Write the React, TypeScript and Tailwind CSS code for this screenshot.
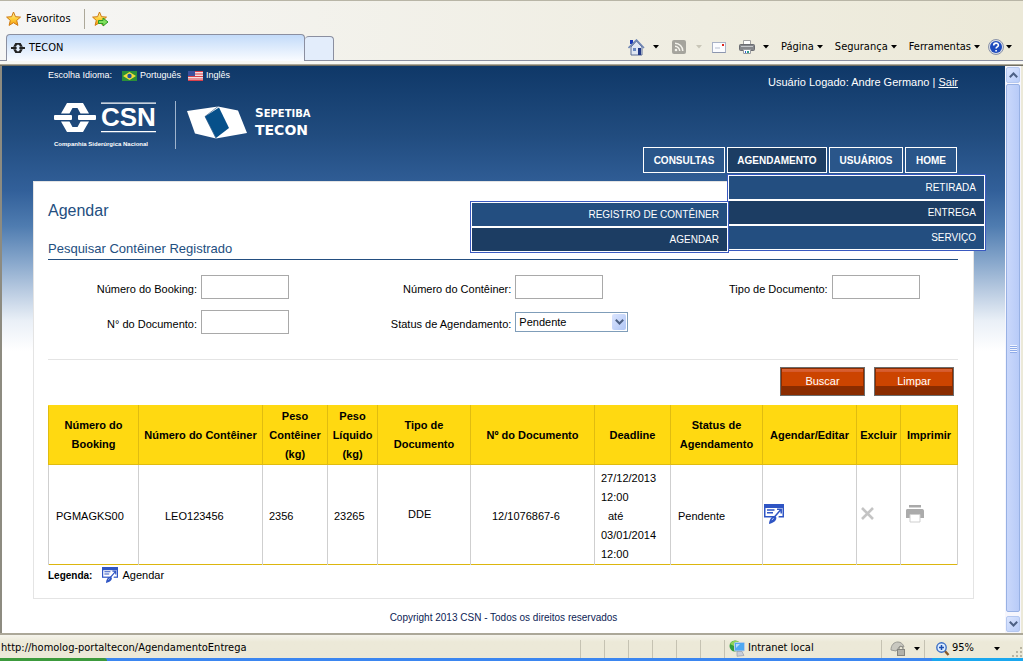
import React, { useState } from 'react';
import clsx from 'clsx';

interface Agendamento {
  booking: string;
  container: string;
  pesoContainer: string;
  pesoLiquido: string;
  tipo: string;
  documento: string;
  deadline: { inicio: string[]; fim: string[] };
  status: string;
}

const agendamentos: Agendamento[] = [
  {
    booking: 'PGMAGKS00',
    container: 'LEO123456',
    pesoContainer: '2356',
    pesoLiquido: '23265',
    tipo: 'DDE',
    documento: '12/1076867-6',
    deadline: { inicio: ['27/12/2013', '12:00'], fim: ['03/01/2014', '12:00'] },
    status: 'Pendente',
  },
];

const columns = [
  { title: 'Número do Booking', width: 'w-[90px]' },
  { title: 'Número do Contêiner', width: 'w-[124px]' },
  { title: 'Peso Contêiner (kg)', width: 'w-[65px]' },
  { title: 'Peso Líquido (kg)', width: 'w-[50px]' },
  { title: 'Tipo de Documento', width: 'w-[93px]' },
  { title: 'Nº do Documento', width: 'w-[124px]' },
  { title: 'Deadline', width: 'w-[76px]' },
  { title: 'Status de Agendamento', width: 'w-[92px]' },
  { title: 'Agendar/Editar', width: 'w-[94px]' },
  { title: 'Excluir', width: 'w-[44px]' },
  { title: 'Imprimir', width: 'w-[57px]' },
];

/* ---------- icons ---------- */

function Caret({ muted = false }: { muted?: boolean }) {
  return (
    <svg width="6" height="4" viewBox="0 0 6 4" className={muted ? 'fill-[#c9c6b8]' : 'fill-black'}>
      <path d="M0 0h6L3 3.6z" />
    </svg>
  );
}

function StarIcon({ withArrow = false }: { withArrow?: boolean }) {
  return (
    <svg width="17" height="16" viewBox="0 0 17 16">
      <defs>
        <linearGradient id="star" x1="0" y1="0" x2="0" y2="1">
          <stop offset="0" stopColor="#fff3b0" />
          <stop offset="0.5" stopColor="#ffd23c" />
          <stop offset="1" stopColor="#f59a12" />
        </linearGradient>
      </defs>
      <path
        d="M7.500 1l2 4.700 5 .4-3.800 3.300 1.200 5-4.400-2.700-4.400 2.700 1.200-5L.6 6.100l5-.4z"
        fill="url(#star)"
        stroke="#cf7a12"
        strokeWidth="1"
        strokeLinejoin="round"
      />
      {withArrow && (
        <path d="M6.500 9.500h4.500V7l5 4-5 4v-2.500H6.500z" fill="#7ee05c" stroke="#2c9a25" strokeWidth="1" strokeLinejoin="round" />
      )}
    </svg>
  );
}

function CsnMark({ className }: { className?: string }) {
  return (
    <svg viewBox="0 0 42 30" className={className} fill="currentColor">
      <path d="M13 0h16l6.500 11H27l-3-5.500h-6L15 11H6.500z" />
      <path d="M13 30h16l6.500-11H27l-3 5.500h-6L15 19H6.500z" />
      <rect x="0" y="12" width="17" height="6" rx="1" />
      <rect x="25" y="12" width="17" height="6" rx="1" />
    </svg>
  );
}

function HomeIcon() {
  return (
    <svg width="17" height="17" viewBox="0 0 17 17">
      <path d="M2 1h3v4H2z" fill="#1838b8" />
      <path d="M3 8l5.500-6L14 8v8H3z" fill="#dfe6f2" stroke="#5d6f96" />
      <path d="M.5 9L8.500 1l7.500 8" fill="none" stroke="#6f86b4" strokeWidth="1.600" />
      <path d="M5 9h3v3H5z" fill="#6a88c0" />
      <path d="M10 9h3v7h-3z" fill="#233a86" />
    </svg>
  );
}

function FeedIcon() {
  return (
    <svg width="14" height="14" viewBox="0 0 14 14">
      <rect width="14" height="14" rx="2" fill="#a5a49d" />
      <circle cx="4" cy="10" r="1.300" fill="#f4f3ec" />
      <path d="M3 6.300A4.700 4.700 0 017.700 11M3 3.200A7.800 7.800 0 0110.800 11" fill="none" stroke="#f4f3ec" strokeWidth="1.500" />
    </svg>
  );
}

function MailIcon() {
  return (
    <svg width="14" height="11" viewBox="0 0 14 11">
      <rect x=".5" y=".5" width="13" height="10" fill="#fbfcff" stroke="#a9b2c6" />
      <path d="M.5 10.500h13" stroke="#8c96ae" />
      <rect x="10" y="2" width="2" height="2" fill="#e0281e" />
      <path d="M3 6h5" stroke="#b7bfcf" />
    </svg>
  );
}

function ToolbarPrinterIcon() {
  return (
    <svg width="16" height="16" viewBox="0 0 16 16">
      <path d="M4.500 1.500h7V6h-7z" fill="#fff" stroke="#a0a0a0" />
      <rect x=".5" y="5.500" width="15" height="6" rx="1" fill="#85878b" stroke="#6b6d72" />
      <path d="M2 7.500h12" stroke="#c6c8cc" />
      <path d="M4.500 10.500h7v4h-7z" fill="#fff" stroke="#9a9ca0" />
      <path d="M6 12h1v2H6z" fill="#2a62d0" />
      <path d="M8 12h2v2H8z" fill="#2f9e8a" />
    </svg>
  );
}

function HelpIcon() {
  return (
    <svg width="16" height="16" viewBox="0 0 16 16">
      <circle cx="8" cy="8" r="7.500" fill="#d9dde6" stroke="#8a93a8" />
      <circle cx="8" cy="8" r="6" fill="#1e4bbd" />
      <path d="M5.700 6.400c0-3 4.700-3 4.700-.2 0 1.600-2.300 1.600-2.300 3.200M8.100 11v1.600" fill="none" stroke="#fff" strokeWidth="1.600" />
    </svg>
  );
}

function BrazilFlag() {
  return (
    <svg width="15" height="10" viewBox="0 0 15 10">
      <rect width="15" height="10" fill="#2c8f38" />
      <path d="M7.500 1L14 5 7.500 9 1 5z" fill="#f3dc3a" />
      <circle cx="7.500" cy="5" r="2.200" fill="#2355a0" />
    </svg>
  );
}

function UsaFlag() {
  return (
    <svg width="15" height="10" viewBox="0 0 15 10">
      <rect width="15" height="10" fill="#f3dfe0" />
      <path d="M0 .5h15M0 3h15M0 5.500h15M0 8h15M0 9.700h15" stroke="#d9404a" strokeWidth="1.200" />
      <rect width="7" height="5" fill="#3c4f9c" />
    </svg>
  );
}

function ScheduleIcon({ className }: { className?: string }) {
  return (
    <svg viewBox="0 0 20 20" className={className}>
      <path d="M0 0h20v13.500H0z" fill="#2f55c4" />
      <path d="M1.500 4h17v8h-17z" fill="#fff" />
      <path d="M3 6h7.500M3 8.800h6" stroke="#2f55c4" strokeWidth="1.400" />
      <path d="M15 9l-5.500 5.200h5z" fill="#fff" />
      <path d="M16.500 6l-6.300 7.300M13 5.200h4.200v4.300" fill="none" stroke="#2f55c4" strokeWidth="1.500" />
      <path d="M12.200 13c.8 3.300-2 5.500-7.200 7 .1-4.200 2.600-7.800 5.400-7.800z" fill="#2f55c4" />
      <path d="M7.800 15.800l1.800-1.400" stroke="#fff" strokeWidth=".8" />
    </svg>
  );
}

function PrintIcon() {
  return (
    <svg width="20" height="18" viewBox="0 0 20 18">
      <path d="M4 0h12v2.500H4z" fill="#a9a9a9" />
      <path d="M2 4h15.500A1.800 1.800 0 0119 6v7h-4V9.500H5V13H1V6a1.800 1.800 0 011-2z" fill="#ababab" />
      <path d="M5 9.500h10v7.500H5z" fill="#fff" stroke="#cfcfcf" />
    </svg>
  );
}

function SepetibaMark() {
  return (
    <svg width="60" height="34" viewBox="0 0 60 34">
      <path d="M0 6L31 1.500 51 5.500 60 28 29 33.500 8 28.500z" fill="#fff" />
      <path d="M18 11.500L32 2.500 42 23 29 33z" fill="#06508a" />
      <path d="M31 1.500L18 11.500 29 33.500" fill="none" stroke="#1d4a7c" strokeWidth=".6" />
    </svg>
  );
}

function NetworkIcon() {
  return (
    <svg width="17" height="17" viewBox="0 0 17 17">
      <circle cx="6" cy="6" r="5.500" fill="#2f9e3c" />
      <path d="M1 4c2-4 7-4 9-2L7 7z" fill="#8fd45a" />
      <rect x="5.500" y="2.500" width="10" height="8.500" rx="1" fill="#4fa8f2" stroke="#b9cbe6" />
      <path d="M7 4h4l-4 4z" fill="#b5ddfb" />
      <path d="M8 11.500h5l2 4-7 .8z" fill="#c9ced8" stroke="#8b93a4" strokeWidth=".6" />
    </svg>
  );
}

function PrivacyIcon() {
  return (
    <svg width="16" height="15" viewBox="0 0 16 15">
      <path d="M1 9C1 4 4 1 8 1c3 0 5 2 6 5l-4-1-4 5z" fill="#c9c8c0" stroke="#9a9a94" />
      <path d="M9 9V7.500a2 2 0 014 0V9" fill="none" stroke="#8e8e88" strokeWidth="1.200" />
      <rect x="7.500" y="8.500" width="7" height="6" fill="#b3b2aa" stroke="#85857f" />
    </svg>
  );
}

function MagnifierIcon() {
  return (
    <svg width="14" height="14" viewBox="0 0 14 14">
      <path d="M8 8l4.500 5" stroke="#8a5a2a" strokeWidth="2.400" />
      <circle cx="5.500" cy="5.500" r="4.700" fill="#dcecff" stroke="#3b6fc4" strokeWidth="1.400" />
      <path d="M3 5.500h5M5.500 3v5" stroke="#1d4fae" strokeWidth="1.500" />
    </svg>
  );
}

function Chevron({ up = false }: { up?: boolean }) {
  return (
    <svg width="9" height="6" viewBox="0 0 9 6" className={clsx(up && 'rotate-180')}>
      <path d="M.8.8l3.700 3.700L8.200.8" fill="none" stroke="#4d6185" strokeWidth="2" />
    </svg>
  );
}

/* ---------- browser chrome ---------- */

function BrowserHeader() {
  return (
    <header className="bg-linear-to-r from-[#f6f6f5] to-[#ece9d8] font-['DejaVu_Sans_Condensed','DejaVu_Sans',sans-serif] text-[11px] text-black">
      <div className="flex h-[34px] items-center border-t border-[#b8b5a6] pl-[6px] pt-[3px]">
        <button type="button" className="flex items-center gap-[3px]">
          <StarIcon />
          Favoritos
        </button>
        <span className="ml-[13px] mr-[7px] h-5 w-px bg-[#aca899]" />
        <button type="button" aria-label="Adicionar à barra de favoritos">
          <StarIcon withArrow />
        </button>
      </div>
      <div className="flex h-[27px] items-end border-b border-[#8b8fa0]">
        <div className="-mb-px ml-[6px] flex h-[27px] w-[299px] items-center gap-1 rounded-t border border-b-0 border-[#8b8fa0] bg-linear-to-b from-[#c3dbf9] to-[#fafcff] pl-1">
          <CsnMark className="h-[10px] w-[14px] text-[#222]" />
          TECON
        </div>
        <button
          type="button"
          aria-label="Nova guia"
          className="h-6 w-[29px] rounded-t border border-b-0 border-l-0 border-[#8b8fa0] bg-[#e3edfb]"
        />
        <div className="flex flex-1 items-center justify-end self-center pr-[11px]">
          <button type="button" aria-label="Página inicial" className="flex items-center gap-2">
            <HomeIcon />
            <Caret />
          </button>
          <button type="button" aria-label="Feeds" className="ml-[13px] flex items-center gap-[10px]">
            <FeedIcon />
            <Caret muted />
          </button>
          <button type="button" aria-label="Ler e-mail" className="ml-[10px]">
            <MailIcon />
          </button>
          <button type="button" aria-label="Imprimir página" className="ml-[13px] flex items-center gap-2">
            <ToolbarPrinterIcon />
            <Caret />
          </button>
          {['Página', 'Segurança', 'Ferramentas'].map((label) => (
            <button key={label} type="button" className="ml-3 flex items-center gap-[3px]">
              {label}
              <Caret />
            </button>
          ))}
          <button type="button" aria-label="Ajuda" className="ml-2 flex items-center gap-0.5">
            <HelpIcon />
            <Caret />
          </button>
        </div>
      </div>
      <div className="h-1 border-b border-[#aca899] bg-[#f8f8f4]" />
      <div className="h-px bg-[#716f64]" />
    </header>
  );
}

function ScrollBar() {
  const arrow =
    'flex h-4 w-full items-center justify-center rounded-xs border border-[#b5c8f0] bg-linear-to-br from-[#dbe5fe] to-[#b9cdf9]';
  return (
    <div className="flex w-[18px] shrink-0 flex-col gap-px border-r-2 border-[#ece9d8] bg-[#f6f6fd] px-px py-px">
      <button type="button" aria-label="Rolar para cima" className={arrow}>
        <Chevron up />
      </button>
      <div className="flex flex-1 flex-col items-center justify-center gap-px rounded-xs border border-[#98b1e4] bg-linear-to-r from-[#cad8fb] to-[#b8cbf8]">
        {[0, 1, 2, 3].map((n) => (
          <span key={n} className="h-px w-[7px] bg-[#f0f4ff] shadow-[0_1px_0_#8fabe8]" />
        ))}
      </div>
      <button type="button" aria-label="Rolar para baixo" className={clsx(arrow, 'mt-[3px]')}>
        <Chevron />
      </button>
    </div>
  );
}

function StatusBar() {
  return (
    <footer className="font-['DejaVu_Sans_Condensed','DejaVu_Sans',sans-serif] text-[11px] text-black">
      <div className="flex h-[25px] items-center border-t-2 border-[#aca899] bg-linear-to-b from-[#f5f4ec] to-[#ece9d8] to-30% pt-1">
        <span className="flex-1 pl-px">http://homolog-portaltecon/AgendamentoEntrega</span>
        <div className="flex h-[18px]">
          {[0, 1, 2, 3, 4, 5].map((n) => (
            <span key={n} className="w-6 border-l border-[#c5c2b2]" />
          ))}
        </div>
        <div className="flex h-[18px] w-[157px] items-center gap-0.5 border-l border-[#c5c2b2] pl-1">
          <NetworkIcon />
          Intranet local
        </div>
        <button type="button" aria-label="Privacidade" className="flex h-[18px] w-[43px] items-center gap-2 border-l border-[#c5c2b2] pl-2">
          <PrivacyIcon />
          <Caret />
        </button>
        <button type="button" className="flex h-[18px] w-[99px] items-center border-l border-[#c5c2b2] pl-[11px]">
          <MagnifierIcon />
          <span className="ml-0.5 flex-1 text-left">95%</span>
          <Caret />
          <svg width="11" height="11" viewBox="0 0 11 11" className="ml-3 self-end fill-[#b8b4a2]">
            <path d="M8 0h2v2H8zM4 4h2v2H4zM8 4h2v2H8zM0 8h2v2H0zM4 8h2v2H4zM8 8h2v2H8z" />
          </svg>
        </button>
      </div>
      <div className="flex h-[3px] bg-[#3b86f0]">
        <span className="w-[107px] rounded-tr bg-[#3c9a3c]" />
        <span className="ml-auto w-[91px] bg-[#1aa7ee]" />
      </div>
    </footer>
  );
}

/* ---------- portal ---------- */

const menuPanel = 'absolute z-10 flex w-[259px] flex-col gap-0.5 border border-[#3a59c0] bg-white p-px';

interface MenuLinkProps {
  label: string;
  active?: boolean;
  width?: string;
  children?: React.ReactNode;
}

function MenuItem({ label, active = false, children }: MenuLinkProps) {
  return (
    <li className="relative">
      <a
        href="#"
        className={clsx(
          'flex h-[23px] items-center justify-end pr-2 text-[10px] text-white',
          active ? 'bg-[#1c3d63]' : 'bg-[#234e80]'
        )}
      >
        {label}
      </a>
      {children}
    </li>
  );
}

function NavItem({ label, active = false, width, children }: MenuLinkProps) {
  return (
    <li className={clsx('relative', width)}>
      <a
        href="#"
        className={clsx(
          'flex h-[26px] items-center justify-center border border-white text-[10px] font-bold text-white',
          active ? 'bg-[#1c3d63]' : 'bg-[#2a568a]'
        )}
      >
        {label}
      </a>
      {children}
    </li>
  );
}

function PortalHeader() {
  return (
    <div className="flex h-[115px] justify-between pl-[46px] pr-[47px] text-white">
      <div>
        <div className="flex h-5 items-center text-[9px]">
          <span>Escolha Idioma:</span>
          <a href="#" className="ml-[10px] flex items-center gap-[3px]">
            <BrazilFlag />
            Português
          </a>
          <a href="#" className="ml-[7px] flex items-center gap-[3px]">
            <UsaFlag />
            Inglês
          </a>
        </div>
        <div className="mt-[15px] flex">
          <svg width="112" height="48" viewBox="0 0 112 48" role="img" aria-label="CSN" className="fill-white">
            <g transform="translate(6 2)">
              <path d="M13 0h16l6 10.500h-8.500l-3-5.500h-5l-3 5.500H7z" />
              <path d="M13 29h16l6-10.500h-8.500l-3 5.500h-5l-3-5.500H7z" />
              <rect x="0" y="12" width="18" height="5" rx="1" />
              <rect x="24" y="12" width="18" height="5" rx="1" />
            </g>
            <path d="M53 1.500h55v1.200H53zM53 30h55v1.200H53z" />
            <text x="53" y="25" fontSize="26" fontWeight="700" fontFamily="Liberation Sans, sans-serif">
              CSN
            </text>
            <text x="6" y="45" fontSize="6" fontWeight="700" fontFamily="Liberation Sans, sans-serif">
              Companhia Siderúrgica Nacional
            </text>
          </svg>
          <span className="ml-[15px] h-[48px] w-px bg-[#9fb4cd]" />
          <div className="ml-[11px] mt-1">
            <SepetibaMark />
          </div>
          <div className="ml-2 mt-[5px] font-['DejaVu_Sans',sans-serif] font-bold">
            <p className="text-[10px] leading-[14px]">
              <span className="text-[12px]">S</span>EPETIBA
            </p>
            <p className="text-[14px] leading-[18px]">TECON</p>
          </div>
        </div>
      </div>
      <div className="flex flex-col items-end justify-between">
        <p className="pt-2 text-[11px] leading-4">
          Usuário Logado: Andre Germano |{' '}
          <a href="#" className="underline">
            Sair
          </a>
        </p>
        <nav className="mb-2 mr-px">
          <ul className="flex gap-0.5">
            <NavItem label="CONSULTAS" width="w-[82px]" />
            <NavItem label="AGENDAMENTO" width="w-[100px]" active>
              <ul className={clsx(menuPanel, 'left-0 top-[27px]')}>
                <MenuItem label="RETIRADA" />
                <MenuItem label="ENTREGA" active>
                  <ul className={clsx(menuPanel, 'right-full top-0')}>
                    <MenuItem label="REGISTRO DE CONTÊINER" />
                    <MenuItem label="AGENDAR" active />
                  </ul>
                </MenuItem>
                <MenuItem label="SERVIÇO" />
              </ul>
            </NavItem>
            <NavItem label="USUÁRIOS" width="w-[74px]" />
            <NavItem label="HOME" width="w-[52px]" />
          </ul>
        </nav>
      </div>
    </div>
  );
}

function Field({ id, label, children }: { id: string; label: string; children?: React.ReactNode }) {
  return (
    <div className="flex h-6 items-center gap-1">
      <label htmlFor={id} className="w-[149px] shrink-0 pt-1 text-right">
        {label}
      </label>
      {children ?? <input id={id} type="text" className="h-6 w-[88px] border border-[#a9a9a9] bg-white px-1" />}
    </div>
  );
}

function SearchForm() {
  const [status, setStatus] = useState('Pendente');
  const button =
    'h-[29px] border border-[#6b6b6b] bg-[linear-gradient(to_bottom,#dd6a38_0px,#d4582a_4px,#cc4400_4px,#cc4400_18px,#8a2c00_18px)] text-[11px] text-white shadow-[inset_0_0_0_1px_#8a2c00]';

  return (
    <form onSubmit={(e) => e.preventDefault()}>
      <div className="mt-[15px] grid grid-cols-[314fr_316fr_279fr] gap-y-[11px] text-[11px] text-black">
        <Field id="booking" label="Número do Booking:" />
        <Field id="container" label="Número do Contêiner:" />
        <Field id="tipo" label="Tipo de Documento:" />
        <Field id="documento" label="N° do Documento:" />
        <Field id="status" label="Status de Agendamento:">
          <div className="relative">
            <select
              id="status"
              value={status}
              onChange={(e) => setStatus(e.target.value)}
              className="block h-5 w-[113px] appearance-none border border-[#7f9db9] bg-white pl-[3px] text-[11px]"
            >
              <option>Pendente</option>
              <option>Agendado</option>
            </select>
            <span className="pointer-events-none absolute inset-y-0.5 right-0.5 flex w-[14px] items-center justify-center rounded-xs bg-linear-to-br from-[#dbe5fe] to-[#b0c6f5]">
              <Chevron />
            </span>
          </div>
        </Field>
      </div>
      <div className="mt-[25px] flex justify-end gap-[9px] border-t border-[#e4e4e4] pr-1 pt-[7px]">
        <button type="submit" className={clsx(button, 'w-[85px]')}>
          Buscar
        </button>
        <button type="reset" className={clsx(button, 'w-[80px]')} onClick={() => setStatus('Pendente')}>
          Limpar
        </button>
      </div>
    </form>
  );
}

function ResultsTable() {
  return (
    <table className="mt-[9px] w-full table-fixed border-collapse text-[11px] leading-[19px] text-black">
      <thead>
        <tr className="h-[59px] bg-[#ffd911]">
          {columns.map((col) => (
            <th key={col.title} scope="col" className={clsx('border border-[#e0bc10] border-t-[#ffd911] p-0 font-bold', col.width)}>
              {col.title}
            </th>
          ))}
        </tr>
      </thead>
      <tbody>
        {agendamentos.map((item) => (
          <tr
            key={item.booking}
            className="h-[99px] border-b border-b-[#dcb60e] [&>td]:border-x [&>td]:border-x-[#cfcfcf] [&>td]:pt-1"
          >
            <td className="pl-[7px]">{item.booking}</td>
            <td className="pl-[26px]">{item.container}</td>
            <td className="pl-[6px]">{item.pesoContainer}</td>
            <td className="pl-[6px]">{item.pesoLiquido}</td>
            <td className="pb-1 pl-[30px]">{item.tipo}</td>
            <td className="pl-[21px]">{item.documento}</td>
            <td className="pl-[6px]">
              {item.deadline.inicio.map((line) => (
                <p key={line}>{line}</p>
              ))}
              <p className="pl-[7px]">até</p>
              {item.deadline.fim.map((line) => (
                <p key={line}>{line}</p>
              ))}
            </td>
            <td className="pl-[7px]">{item.status}</td>
            <td className="pb-[6px] pl-px">
              <button type="button" aria-label="Agendar" className="block">
                <ScheduleIcon className="size-5" />
              </button>
            </td>
            <td className="pb-[6px] pl-1">
              <button type="button" aria-label="Excluir" className="block">
                <svg width="13" height="13" viewBox="0 0 13 13">
                  <path d="M1 1l11 11M12 1L1 12" stroke="#c4c4c4" strokeWidth="2.600" />
                </svg>
              </button>
            </td>
            <td className="pb-[6px] pl-1">
              <button type="button" aria-label="Imprimir" className="block">
                <PrintIcon />
              </button>
            </td>
          </tr>
        ))}
      </tbody>
    </table>
  );
}

export default function App() {
  return (
    <div className="flex min-h-screen flex-col bg-[#ece9d8]">
      <BrowserHeader />
      <div className="flex flex-1">
        <main className="flex-1 border-l-2 border-[#8d8b80] bg-white bg-[linear-gradient(to_bottom,#0f3868_0px,#214c7f_70px,#32609a_125px,#4f7cb0_160px,#86a6cb_195px,#b9cbe1_225px,#eaf0f7_255px,#ffffff_285px)] font-['Liberation_Sans',Arial,sans-serif]">
          <PortalHeader />
          <section className="mx-[31px] border border-[#e4e4e4] bg-white pb-[13px] pl-[14px] pr-[15px] pt-[17px]">
            <h1 className="text-[16px] leading-6 text-[#234e80]">Agendar</h1>
            <h2 className="mt-4 border-b border-[#234e80] text-[13px] leading-5 text-[#234e80]">
              Pesquisar Contêiner Registrado
            </h2>
            <SearchForm />
            <ResultsTable />
            <div className="flex h-5 items-center text-[10px] text-black">
              <strong>Legenda:</strong>
              <ScheduleIcon className="ml-[10px] mr-1 size-4" />
              <span className="text-[11px]">Agendar</span>
            </div>
          </section>
          <p className="mt-[11px] text-center text-[10px] leading-4 text-[#0b2355]">
            Copyright 2013 CSN - Todos os direitos reservados
          </p>
        </main>
        <ScrollBar />
      </div>
      <StatusBar />
    </div>
  );
}
